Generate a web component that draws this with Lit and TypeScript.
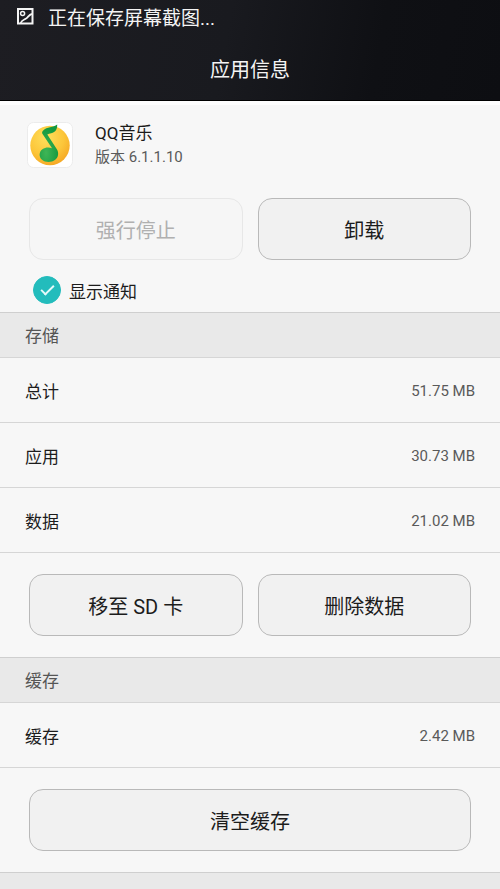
import { LitElement, html, css } from "lit";
import { customElement, property, state } from "lit/decorators.js";

interface SizeEntry {
  label: string;
  size: string;
}

@customElement("size-table")
export class SizeTable extends LitElement {
  @property({ attribute: false }) entries: SizeEntry[] = [];

  static styles = css`
    :host {
      display: block;
    }
    .table {
      width: 100%;
      border-collapse: separate;
      border-spacing: 0;
    }
    .label,
    .size {
      box-sizing: border-box;
      height: 65px;
      padding: 1px 25px 0;
      border-bottom: 1px solid #d6d6d6;
      font-weight: 400;
      vertical-align: middle;
    }
    .label {
      text-align: left;
      font-size: 17px;
      color: #1c1c1c;
    }
    .size {
      text-align: right;
      font-size: 15px;
      color: #5a5a5a;
    }
  `;

  render() {
    return html`<table class="table">
      <tbody>
        ${this.entries.map(
          (e) => html`<tr>
            <th class="label" scope="row">${e.label}</th>
            <td class="size">${e.size}</td>
          </tr>`
        )}
      </tbody>
    </table>`;
  }
}

@customElement("app-root")
export class AppRoot extends LitElement {
  @state() private notify = true;

  private storage: SizeEntry[] = [
    { label: "总计", size: "51.75 MB" },
    { label: "应用", size: "30.73 MB" },
    { label: "数据", size: "21.02 MB" },
  ];

  private cache: SizeEntry[] = [{ label: "缓存", size: "2.42 MB" }];

  static styles = css`
    :host {
      display: flex;
      flex-direction: column;
      height: 100vh;
      overflow: hidden;
      background: #f7f7f7;
      color: #1c1c1c;
      font-family: Roboto, "Noto Sans CJK SC", sans-serif;
      font-size: 17px;
    }
    .header {
      flex: none;
      background: linear-gradient(100deg, #1d1d22 0%, #191a1f 45%, #0f1014 75%, #0d0e12 100%);
      color: #f4f4f4;
      border-bottom: 1px solid #000;
    }
    .status {
      display: flex;
      align-items: center;
      gap: 14px;
      height: 32px;
      padding: 0 16px;
      font-size: 19px;
    }
    .status-icon {
      width: 18px;
      height: 18px;
    }
    .title {
      margin: 0;
      padding-top: 8px;
      line-height: 60px;
      text-align: center;
      font-size: 20px;
      font-weight: 400;
    }
    .content {
      flex: 1;
      display: flex;
      flex-direction: column;
      border-top: 4px solid #fdfdfd;
    }
    .app {
      display: flex;
      align-items: center;
      gap: 22px;
      padding: 16px 27px 0;
    }
    .app-icon {
      width: 46px;
      height: 46px;
    }
    .app-text {
      display: flex;
      flex-direction: column;
    }
    .app-name {
      margin: 0;
      font-size: 17px;
      line-height: 24px;
      font-weight: 400;
    }
    .version {
      margin: 0;
      font-size: 15px;
      line-height: 24px;
      color: #5a5a5a;
    }
    .actions {
      display: flex;
      gap: 15px;
      padding: 21px 29px;
    }
    .top-actions {
      padding: 29px 29px 16px;
    }
    .button {
      flex: 1;
      box-sizing: border-box;
      height: 62px;
      padding: 0;
      border: 1px solid #b9b9b9;
      border-radius: 14px;
      background: #f1f1f1;
      color: #1c1c1c;
      font-family: inherit;
      font-size: 20px;
    }
    .button:disabled {
      border-color: #e7e7e7;
      background: #f6f6f6;
      color: #b0b0b0;
    }
    .notify {
      display: flex;
      align-items: center;
      gap: 8px;
      padding: 0 33px 8px;
    }
    .check {
      appearance: none;
      display: grid;
      place-items: center;
      box-sizing: border-box;
      width: 28px;
      height: 28px;
      margin: 0;
      border: 1px solid #b9b9b9;
      border-radius: 50%;
    }
    .check:checked {
      border-color: #23bcbc;
      background: #23bcbc;
    }
    .check:checked::before {
      content: "";
      width: 11px;
      height: 5px;
      margin-bottom: 4px;
      border-left: 2px solid #e6fafa;
      border-bottom: 2px solid #e6fafa;
      transform: rotate(-45deg);
    }
    .section {
      flex: none;
      box-sizing: border-box;
      height: 46px;
      margin: 0;
      padding: 0 25px;
      border-top: 1px solid #cfcfcf;
      border-bottom: 1px solid #d6d6d6;
      background: #e9e9e9;
      color: #555;
      font-size: 17px;
      line-height: 46px;
      font-weight: 400;
    }
  `;

  private onNotify(e: Event) {
    this.notify = (e.target as HTMLInputElement).checked;
  }

  render() {
    return html`
      <header class="header">
        <div class="status">
          <svg class="status-icon" viewBox="0 0 18 18" fill="none" stroke="#f4f4f4" aria-hidden="true">
            <rect x="2" y="2" width="14.5" height="14.5" stroke-width="2" />
            <circle cx="6.6" cy="6.4" r="2" stroke-width="1.5" />
            <path d="M4.6 16C6.2 12.4 8.6 13 10.6 11.2C12.6 9.3 13.2 7.6 16 6.8" stroke-width="1.8" />
          </svg>
          <span>正在保存屏幕截图...</span>
        </div>
        <h1 class="title">应用信息</h1>
      </header>
      <main class="content">
        <div class="app">
          <svg class="app-icon" viewBox="0 0 46 46" aria-hidden="true">
            <defs>
              <radialGradient id="disc" cx="0.4" cy="0.3" r="0.75">
                <stop offset="0" stop-color="#ffdf5c" />
                <stop offset="0.6" stop-color="#fcc63a" />
                <stop offset="1" stop-color="#f5a623" />
              </radialGradient>
              <radialGradient id="note" cx="0.35" cy="0.75" r="0.7">
                <stop offset="0" stop-color="#3fb556" />
                <stop offset="1" stop-color="#12983f" />
              </radialGradient>
            </defs>
            <rect x="0.5" y="0.5" width="45" height="45" rx="6" fill="#fff" stroke="#ececec" />
            <circle cx="23" cy="23.5" r="19.7" fill="url(#disc)" />
            <path
              d="M30.2 2.6C30.3 7.2 28.8 10.4 24.2 11.3C22.6 11.6 21.3 11.9 20.3 12.6L30 27.4C32 31 31.4 35.2 28.2 37.8C24.4 40.8 18.4 40.8 15 37.8C11.6 34.8 11.9 29.8 15.4 27.2C18.2 25.2 21.9 25 25 26.2L15.4 11.8C14.8 10.6 15.2 9.4 16.2 8.4C19.8 4.8 26.4 5.8 30.2 2.6Z"
              fill="url(#note)"
            />
          </svg>
          <div class="app-text">
            <h2 class="app-name">QQ音乐</h2>
            <p class="version">版本 6.1.1.10</p>
          </div>
        </div>
        <div class="actions top-actions">
          <button class="button" type="button" disabled>强行停止</button>
          <button class="button" type="button">卸载</button>
        </div>
        <div class="notify">
          <input class="check" id="notify" type="checkbox" .checked=${this.notify} @change=${this.onNotify} />
          <label for="notify">显示通知</label>
        </div>
        <h2 class="section">存储</h2>
        <size-table .entries=${this.storage}></size-table>
        <div class="actions">
          <button class="button" type="button">移至 SD 卡</button>
          <button class="button" type="button">删除数据</button>
        </div>
        <h2 class="section">缓存</h2>
        <size-table .entries=${this.cache}></size-table>
        <div class="actions">
          <button class="button" type="button">清空缓存</button>
        </div>
        <div class="section"></div>
      </main>
    `;
  }
}
